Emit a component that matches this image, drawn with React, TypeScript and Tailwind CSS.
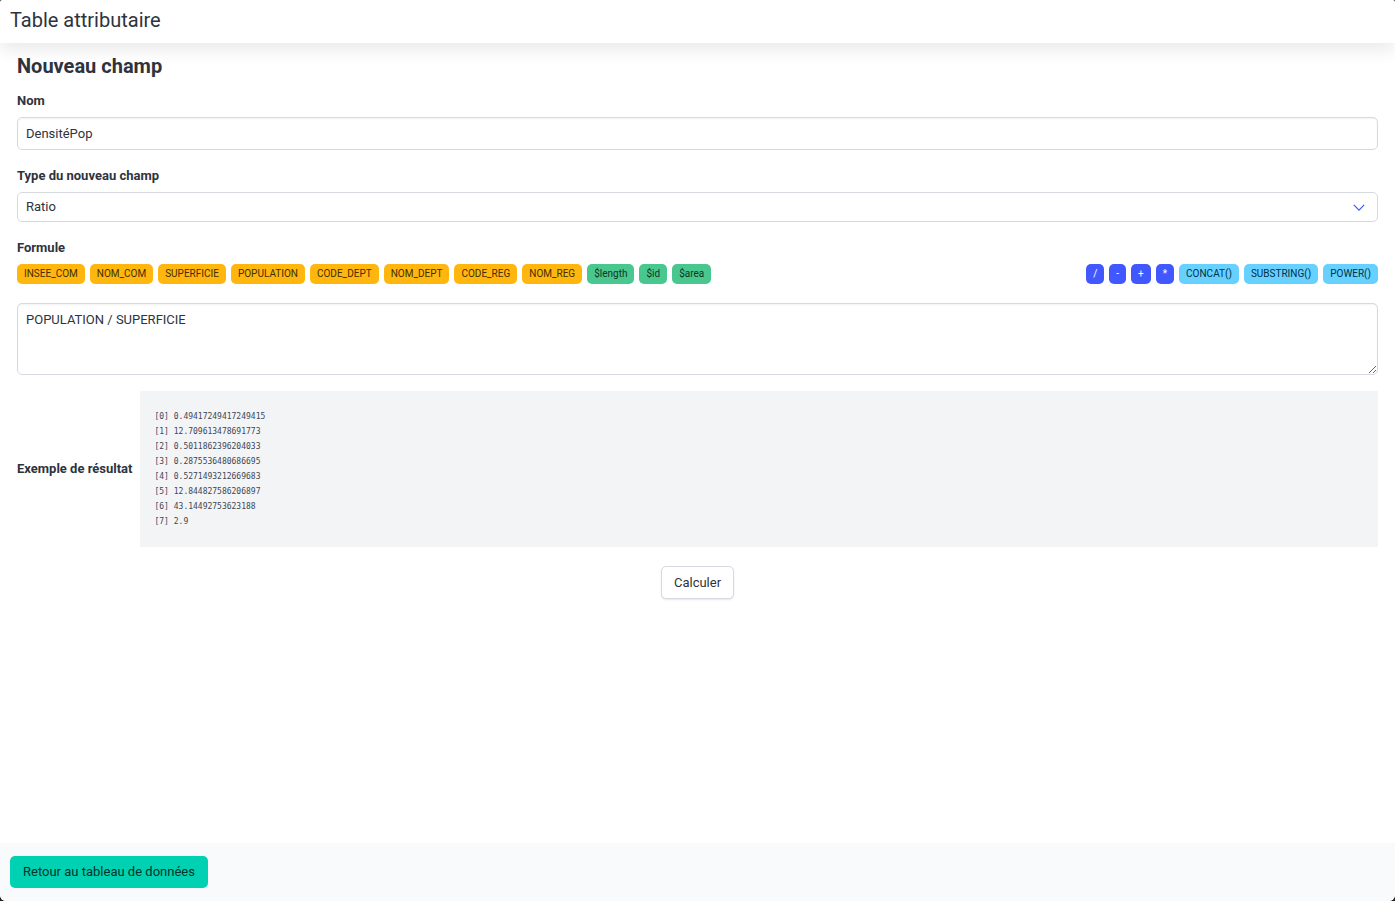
import { useState } from "react";
import clsx from "clsx";

const fields = [
  "INSEE_COM",
  "NOM_COM",
  "SUPERFICIE",
  "POPULATION",
  "CODE_DEPT",
  "NOM_DEPT",
  "CODE_REG",
  "NOM_REG",
];
const specialFields = ["$length", "$id", "$area"];
const operators = ["/", "-", "+", "*"];
const functions = ["CONCAT()", "SUBSTRING()", "POWER()"];

const results = [
  "0.49417249417249415",
  "12.709613478691773",
  "0.5011862396204033",
  "0.2875536480686695",
  "0.5271493212669683",
  "12.844827586206897",
  "43.14492753623188",
  "2.9",
];

const colors = {
  warning: "bg-[#ffb70f] text-[#422e00]",
  success: "bg-[#48c78e] text-[#123524]",
  link: "bg-[#4258ff] text-white",
  info: "bg-[#66d1ff] text-[#003047]",
};

type TagProps = {
  label: string;
  color: keyof typeof colors;
  onClick: (value: string) => void;
};

function Tag({ label, color, onClick }: TagProps) {
  return (
    <button
      type="button"
      onClick={() => onClick(label)}
      className={clsx(
        "h-5 rounded-[5px] px-[7px] text-[10px] leading-5 whitespace-nowrap",
        colors[color]
      )}
    >
      {label}
    </button>
  );
}

export default function App() {
  const [name, setName] = useState("DensitéPop");
  const [type, setType] = useState("ratio");
  const [formula, setFormula] = useState("POPULATION / SUPERFICIE");

  const append = (value: string) => setFormula(`${formula} ${value}`);

  return (
    <div className="bg-[#222222] font-['Roboto',sans-serif] text-[13px] leading-5 text-[#2e333d]">
      <div className="flex min-h-screen flex-col overflow-hidden rounded-t-[2px] rounded-b-md bg-white">
        <header className="z-10 px-[10px] pt-[10px] pb-[13px] shadow-[0_8px_16px_rgba(10,10,10,0.08)]">
          <p className="text-[20px] leading-5">Table attributaire</p>
        </header>

        <main className="flex-1 px-[17px] pt-[13px]">
          <h1 className="text-[20px] leading-5 font-bold">Nouveau champ</h1>

          {/* Nom */}
          <div className="mt-[15px]">
            <label htmlFor="name" className="block font-bold">
              Nom
            </label>
            <input
              id="name"
              type="text"
              value={name}
              onChange={(e) => setName(e.target.value)}
              className="mt-[6px] block h-[33px] w-full rounded-[5px] border border-[#d6d9e0] px-2 shadow-[inset_0_1px_2px_rgba(10,10,10,0.05)]"
            />
          </div>

          {/* Type */}
          <div className="mt-4">
            <label htmlFor="type" className="block font-bold">
              Type du nouveau champ
            </label>
            <div className="relative mt-[6px]">
              <select
                id="type"
                value={type}
                onChange={(e) => setType(e.target.value)}
                className="block h-[30px] w-full appearance-none rounded-[5px] border border-[#d6d9e0] bg-white px-2"
              >
                <option value="ratio">Ratio</option>
                <option value="stock">Stock</option>
                <option value="category">Catégorie</option>
              </select>
              <svg
                viewBox="0 0 12 8"
                fill="none"
                stroke="#4258ff"
                className="pointer-events-none absolute top-3 right-[13px] h-2 w-3"
              >
                <path d="M0.8 0.8 L6 6.2 L11.2 0.8" strokeWidth="1.2" />
              </svg>
            </div>
          </div>

          {/* Formule */}
          <div className="mt-4">
            <label htmlFor="formula" className="block font-bold">
              Formule
            </label>
            <div className="mt-[6px] flex flex-wrap justify-between gap-[5px]">
              <div className="flex flex-wrap gap-[5px]">
                {fields.map((f) => (
                  <Tag key={f} label={f} color="warning" onClick={append} />
                ))}
                {specialFields.map((f) => (
                  <Tag key={f} label={f} color="success" onClick={append} />
                ))}
              </div>
              <div className="flex flex-wrap gap-[5px]">
                {operators.map((o) => (
                  <Tag key={o} label={o} color="link" onClick={append} />
                ))}
                {functions.map((f) => (
                  <Tag key={f} label={f} color="info" onClick={append} />
                ))}
              </div>
            </div>
            <textarea
              id="formula"
              value={formula}
              onChange={(e) => setFormula(e.target.value)}
              className="mt-[19px] block h-[72px] w-full resize rounded-[5px] border border-[#d6d9e0] px-2 py-[6px] shadow-[inset_0_1px_2px_rgba(10,10,10,0.05)]"
            />
          </div>

          {/* Exemple */}
          <div className="mt-4 flex items-center gap-2">
            <span className="font-bold">Exemple de résultat</span>
            <pre className="flex-1 bg-[#f3f4f6] px-[14px] py-[18px] font-['DejaVu_Sans_Mono',monospace] text-[8px] leading-[15px] text-[#404654]">
              {results.map((r, i) => `[${i}] ${r}`).join("\n")}
            </pre>
          </div>

          <div className="mt-[19px] flex justify-center">
            <button
              type="button"
              className="h-[33px] rounded-[5px] border border-[#d6d9e0] bg-white px-3 shadow-[0_1px_2px_rgba(10,10,10,0.1)]"
            >
              Calculer
            </button>
          </div>
        </main>

        <footer className="bg-[#f9fafb] px-[10px] py-[13px]">
          <button
            type="button"
            className="h-8 rounded-[5px] bg-[#00d1b2] px-[13px] text-[#00332b]"
          >
            Retour au tableau de données
          </button>
        </footer>
      </div>
    </div>
  );
}
